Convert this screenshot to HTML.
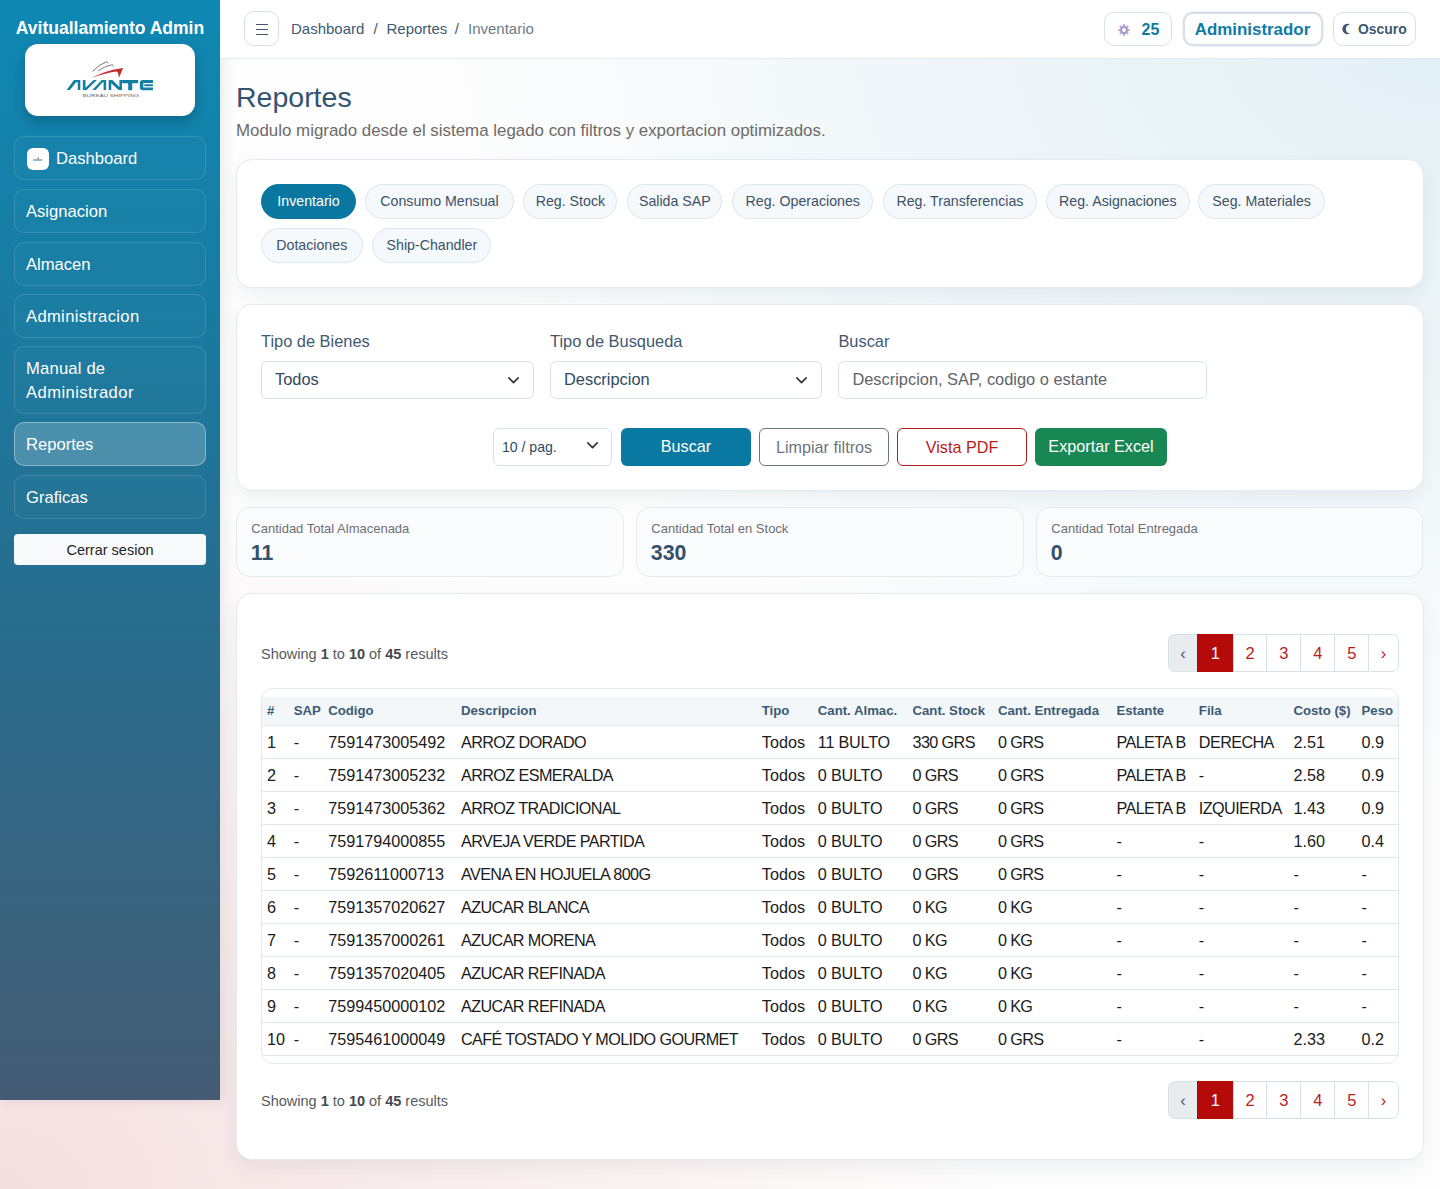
<!DOCTYPE html>
<html lang="es">
<head>
<meta charset="utf-8">
<title>Reportes</title>
<style>
*{box-sizing:border-box;margin:0;padding:0}
html,body{width:1440px;height:1189px;overflow:hidden}
body{font-family:"Liberation Sans",sans-serif;position:relative;
  background:radial-gradient(ellipse 1000px 800px at 100% 0%,#e1eff5 0%,rgba(225,239,245,0.6) 40%,rgba(225,239,245,0) 100%),
    radial-gradient(ellipse 1000px 700px at 0% 100%,#f5e0e1 0%,rgba(245,224,225,0.6) 40%,rgba(245,224,225,0) 100%),#fdfdfd;}
.abs{position:absolute}
/* sidebar */
#sb{left:0;top:0;width:220px;height:1100px;
  background:linear-gradient(180deg,#0e88b3 0%,#1a7aa0 30%,#2a6b8b 60%,#445b73 100%);
  box-shadow:3px 0 12px rgba(40,50,60,0.10);z-index:5}
#sb .ttl{position:absolute;left:0;top:16px;width:220px;text-align:center;color:#fff;font-weight:bold;font-size:17.5px;line-height:24px;white-space:nowrap}
#logo{position:absolute;left:25px;top:44px;width:170px;height:72px;background:#fff;border-radius:13px;box-shadow:0 6px 12px rgba(0,30,50,0.25)}
.nav{position:absolute;left:14px;width:192px;border:1px solid rgba(255,255,255,0.13);border-radius:10px;color:#fff;font-size:16.6px;line-height:24px;padding:10px 11px 8px;background:rgba(255,255,255,0.015)}
.nav.act{background:rgba(255,255,255,0.2);border-color:rgba(255,255,255,0.35)}
#logout{position:absolute;left:14px;top:534px;width:192px;height:31px;background:#f8f9fa;border-radius:4px;color:#212529;font-size:14.5px;line-height:32px;text-align:center}
/* topbar */
#top{left:220px;top:0;width:1220px;height:59px;background:#fff;border-bottom:1px solid #e3eaf0;z-index:6}
#ham{position:absolute;left:24px;top:11px;width:35px;height:35px;border:1px solid #d5e0e8;border-radius:10px}
#ham i{position:absolute;left:11px;width:11.8px;height:1.3px;background:#3d5570}
.bc{position:absolute;top:19px;font-size:15px;line-height:20px;color:#3d5a73;white-space:nowrap}
.tbtn{position:absolute;top:12px;height:34px;border:1px solid #d6e1e9;border-radius:10px;background:#fff}
/* main */
h1{position:absolute;left:236px;top:79px;font-size:28.5px;font-weight:normal;color:#33536f;line-height:36px;white-space:nowrap}
.sub{position:absolute;left:236px;top:120px;font-size:16.9px;color:#6f6a68;line-height:22px;white-space:nowrap}
.card{position:absolute;left:236px;width:1188px;background:#fff;border:1px solid #e3ebf1;border-radius:16px;box-shadow:0 8px 18px rgba(20,45,70,0.06)}
.tab{position:absolute;height:34.8px;border:1px solid #dbe6ef;border-radius:18px;background:#f5f9fc;color:#3d5166;font-size:14.2px;line-height:32.8px;text-align:center;white-space:nowrap}
.tab.act{background:#0a77a0;border-color:#0a77a0;color:#fff}
.lbl{position:absolute;font-size:16.4px;color:#3f5870;line-height:20px;white-space:nowrap}
.sel{position:absolute;height:37.5px;border:1px solid #d6e3ec;border-radius:6px;background:#fff;font-size:16.4px;color:#2f4a63;line-height:35px;white-space:nowrap}
.chev{position:absolute;width:8px;height:8px;border-right:2px solid #2a3340;border-bottom:2px solid #2a3340;transform:rotate(45deg)}
.btn{position:absolute;top:428px;height:38px;border-radius:6px;font-size:16.2px;line-height:36px;text-align:center;white-space:nowrap}
.stat{position:absolute;top:507px;width:388px;height:69.5px;background:#fbfcfe;border:1px solid #e3ebf1;border-radius:14px}
.stat .l{position:absolute;left:14px;top:12.5px;font-size:13px;color:#6b6f75;line-height:16px;white-space:nowrap}
.stat .v{position:absolute;left:13.5px;top:32.5px;font-size:21.3px;font-weight:bold;color:#34506b;line-height:24px}
.show{position:absolute;left:261px;font-size:14.5px;color:#555b61;line-height:20px;white-space:nowrap}
.show b{color:#43484d}
.pag{position:absolute;left:1168.2px;width:231px;height:38px;display:flex}
.pag span{display:block;box-sizing:border-box;height:38px;line-height:36px;text-align:center;color:#b91c1c;font-size:16.5px;border:1px solid #d6e2ea;border-right:none;background:#fff}
.pag span:first-child{background:#e9ecef;color:#4a5a6a;width:28.6px;border-radius:7px 0 0 7px}
.pag span:last-child{border-right:1px solid #d6e2ea;border-radius:0 7px 7px 0}
.pag span.a{background:#b50a0a;color:#fff;border-color:#b50a0a}
#tw{position:absolute;left:261px;top:688px;width:1138px;height:376px;border:1px solid #e1e9ef;border-radius:12px;padding-top:8px;background:#fff}
table{border-collapse:collapse;table-layout:fixed;width:1136px}
th{background:#f3f7fa;height:28.3px;text-align:left;font-size:13.2px;font-weight:bold;color:#3d5a73;padding:0 0 0 5px;white-space:nowrap;border-bottom:1px solid #dfe7ed;line-height:26px}
td:nth-child(4),td:nth-child(7),td:nth-child(8),td:nth-child(9),td:nth-child(10){letter-spacing:-0.6px}
td:nth-child(6){letter-spacing:-0.2px}
td{height:33px;text-align:left;font-size:16.2px;color:#1b1b1b;padding:0 0 0 5px;white-space:nowrap;border-bottom:1px solid #dfe6ec;line-height:32px}
</style>
</head>
<body>
<!-- sidebar -->
<div id="sb" class="abs">
  <div class="ttl">Avituallamiento Admin</div>
  <div id="logo">
    <svg width="170" height="72" viewBox="0 0 170 72">
      <g transform="translate(39,32) scale(0.0416667)" fill="#137ea3">
        <path d="M62 338 L240 98 L392 98 L392 338 L330 338 L330 150 L290 150 L142 338 Z"/>
        <path d="M452 98 L516 98 L516 282 L712 98 L792 98 L540 338 L452 338 Z"/>
        <path d="M680 338 L905 98 L1012 98 L1012 338 L950 338 L950 150 L925 150 L760 338 Z"/>
        <path d="M1072 98 L1160 98 L1330 262 L1330 98 L1392 98 L1392 338 L1310 338 L1134 172 L1134 338 L1072 338 Z"/>
      </g>
      <g transform="translate(35,12) scale(0.069444)">
        <path d="M895 345 L1125 345 L1125 392 L1040 392 L1040 492 L982 492 L982 392 L895 392 Z" fill="#137ea3"/>
        <path d="M1195 345 L1338 345 L1338 390 L1200 390 L1200 452 L1338 452 L1338 495 L1195 495 Q1150 495 1150 455 L1150 385 Q1150 345 1195 345 Z" fill="#137ea3"/><rect x="1215" y="407" width="123" height="28" fill="#137ea3"/>
        <path d="M458 318 Q640 210 908 172 L848 318 Q842 240 822 222 Q660 236 458 318 Z" fill="#c8282a"/>
        <path d="M470 222 Q560 120 672 82 Q690 85 690 105" stroke="#6d6d6d" stroke-width="14" fill="none"/>
        <path d="M548 214 Q650 140 755 125 Q772 132 768 152" stroke="#7a7a7a" stroke-width="14" fill="none"/>
        
      </g>
      <text x="57.5" y="52.6" font-family="Liberation Sans" font-size="4.2" fill="#6a6a6a" textLength="56.5" lengthAdjust="spacingAndGlyphs">BUREAU SHIPPING</text>
    </svg>
  </div>
  <div class="nav" style="top:136px;height:44px;padding-left:41px">
    <span style="position:absolute;left:12px;top:11px;width:22px;height:22px;background:#fff;border-radius:6px"><svg width="22" height="22" style="position:absolute;left:0;top:0"><rect x="6.2" y="11" width="9" height="2" fill="#8fbcd0"/><circle cx="11.2" cy="10.4" r="0.9" fill="#e06060"/></svg></span>Dashboard</div>
  <div class="nav" style="top:189px;height:44px">Asignacion</div>
  <div class="nav" style="top:241.5px;height:44px">Almacen</div>
  <div class="nav" style="top:294px;height:44px;letter-spacing:0.33px">Administracion</div>
  <div class="nav" style="top:346px;height:68px"><span style="letter-spacing:0.2px">Manual de</span><br><span style="letter-spacing:0.42px">Administrador</span></div>
  <div class="nav act" style="top:422px;height:44px">Reportes</div>
  <div class="nav" style="top:475px;height:44px">Graficas</div>
  <div id="logout">Cerrar sesion</div>
</div>

<!-- topbar -->
<div id="top" class="abs">
  <div id="ham"><i style="top:11.8px"></i><i style="top:16.8px"></i><i style="top:21.6px"></i></div>
  <div class="bc" style="left:71px">Dashboard</div><div class="bc" style="left:153.5px">/</div><div class="bc" style="left:166.5px">Reportes</div><div class="bc" style="left:234.8px">/</div><div class="bc" style="left:248px;color:#6b7a88">Inventario</div>
  <div class="tbtn" style="left:884px;width:67.5px"><svg style="position:absolute;left:13px;top:10.5px" width="12" height="12" viewBox="0 0 12 12"><path fill-rule="evenodd" d="M10.22 5.16 L11.70 4.48 L11.70 7.52 L10.22 6.84 L9.58 8.39 L11.10 8.96 L8.96 11.10 L8.39 9.58 L6.84 10.22 L7.52 11.70 L4.48 11.70 L5.16 10.22 L3.61 9.58 L3.04 11.10 L0.90 8.96 L2.42 8.39 L1.78 6.84 L0.30 7.52 L0.30 4.48 L1.78 5.16 L2.42 3.61 L0.90 3.04 L3.04 0.90 L3.61 2.42 L5.16 1.78 L4.48 0.30 L7.52 0.30 L6.84 1.78 L8.39 2.42 L8.96 0.90 L11.10 3.04 L9.58 3.61 Z M6 4.1 A1.9 1.9 0 1 0 6 7.9 A1.9 1.9 0 1 0 6 4.1 Z" fill="#b9abd8"/><circle cx="6" cy="6" r="2.9" fill="none" stroke="#9a8cc0" stroke-width="1"/></svg><span style="position:absolute;left:36.5px;top:7px;font-size:16px;line-height:20px;font-weight:bold;color:#0f7ba3">25</span></div>
  <div class="tbtn" style="left:962.5px;width:140px;top:12.3px;height:33.5px;border:2px solid #d5e0e8;box-shadow:0 0 0 0.5px #e3eaf0"><span style="position:absolute;left:0;width:136px;text-align:center;top:6px;font-size:16.9px;line-height:20px;font-weight:bold;color:#0f7ba3">Administrador</span></div>
  <div class="tbtn" style="left:1113px;width:83px"><svg style="position:absolute;left:8px;top:10.3px" width="10" height="12" viewBox="0 0 10 12"><path d="M7.98 1.43 A5.2 5.2 0 1 0 7.98 10.57 A4.6 4.6 0 0 1 7.98 1.43 Z" fill="#3d5a73"/></svg><span style="position:absolute;left:24px;top:7px;font-size:13.9px;line-height:18px;font-weight:bold;color:#3d5a73">Oscuro</span></div>
</div>

<h1>Reportes</h1>
<div class="sub">Modulo migrado desde el sistema legado con filtros y exportacion optimizados.</div>

<!-- tabs card -->
<div class="card" style="top:159px;height:128.5px"></div>
<div class="tab act" style="left:261px;top:183.8px;width:95px">Inventario</div>
<div class="tab" style="left:365px;top:183.8px;width:149px">Consumo Mensual</div>
<div class="tab" style="left:523.3px;top:183.8px;width:94.2px">Reg. Stock</div>
<div class="tab" style="left:627.2px;top:183.8px;width:95.3px">Salida SAP</div>
<div class="tab" style="left:732.2px;top:183.8px;width:141.1px">Reg. Operaciones</div>
<div class="tab" style="left:883px;top:183.8px;width:153.8px">Reg. Transferencias</div>
<div class="tab" style="left:1046px;top:183.8px;width:143.7px">Reg. Asignaciones</div>
<div class="tab" style="left:1198.2px;top:183.8px;width:126.8px">Seg. Materiales</div>
<div class="tab" style="left:261px;top:228.1px;width:101.5px">Dotaciones</div>
<div class="tab" style="left:372.3px;top:228.1px;width:119.2px">Ship-Chandler</div>

<!-- filter card -->
<div class="card" style="top:303.8px;height:187px"></div>
<div class="lbl" style="left:261px;top:331px">Tipo de Bienes</div>
<div class="lbl" style="left:550px;top:331px">Tipo de Busqueda</div>
<div class="lbl" style="left:838.4px;top:331px">Buscar</div>
<div class="sel" style="left:261px;top:361px;width:273px;padding-left:13px">Todos<svg style="position:absolute;left:245.6px;top:14.6px" width="11" height="7" viewBox="0 0 11 7"><polyline points="0.8,0.9 5.5,5.6 10.2,0.9" fill="none" stroke="#343a40" stroke-width="1.7" stroke-linecap="round" stroke-linejoin="round"/></svg></div>
<div class="sel" style="left:550px;top:361px;width:272px;padding-left:13px">Descripcion<svg style="position:absolute;left:245px;top:14.6px" width="11" height="7" viewBox="0 0 11 7"><polyline points="0.8,0.9 5.5,5.6 10.2,0.9" fill="none" stroke="#343a40" stroke-width="1.7" stroke-linecap="round" stroke-linejoin="round"/></svg></div>
<div class="sel" style="left:838.4px;top:361px;width:368.5px;padding-left:13px;color:#5f6469">Descripcion, SAP, codigo o estante</div>
<div class="sel" style="left:493.4px;top:428.4px;width:119px;height:37.5px;padding-left:7.5px;padding-top:1px;font-size:14.1px">10 / pag.<svg style="position:absolute;left:92.6px;top:12.3px" width="11" height="7" viewBox="0 0 11 7"><polyline points="0.8,0.9 5.5,5.6 10.2,0.9" fill="none" stroke="#343a40" stroke-width="1.7" stroke-linecap="round" stroke-linejoin="round"/></svg></div>
<div class="btn" style="left:621px;width:130px;background:#0a79a1;color:#fff">Buscar</div>
<div class="btn" style="left:759px;width:130px;border:1px solid #6c757d;color:#6c757d;background:#fff">Limpiar filtros</div>
<div class="btn" style="left:897px;width:130px;border:1px solid #b91c1c;color:#b91c1c;background:#fff">Vista PDF</div>
<div class="btn" style="left:1035px;width:132px;background:#198754;color:#fff">Exportar Excel</div>

<!-- stats -->
<div class="stat" style="left:236.3px"><div class="l">Cantidad Total Almacenada</div><div class="v">11</div></div>
<div class="stat" style="left:636.3px"><div class="l">Cantidad Total en Stock</div><div class="v">330</div></div>
<div class="stat" style="left:1036.3px;width:387px"><div class="l">Cantidad Total Entregada</div><div class="v">0</div></div>

<!-- table card -->
<div class="card" style="top:593px;height:567px"></div>
<div class="show" style="top:643.5px">Showing <b>1</b> to <b>10</b> of <b>45</b> results</div>
<div class="pag" style="top:634px"><span>&#8249;</span><span class="a" style="width:36.1px">1</span><span style="width:33.5px">2</span><span style="width:33.9px">3</span><span style="width:34.2px">4</span><span style="width:33.8px">5</span><span style="width:30.4px">&#8250;</span></div>

<div id="tw">
<table>
<colgroup><col style="width:26.8px"><col style="width:34.4px"><col style="width:132.8px"><col style="width:300.8px"><col style="width:56px"><col style="width:94.7px"><col style="width:85.4px"><col style="width:118.6px"><col style="width:82.4px"><col style="width:94.6px"><col style="width:68.1px"><col style="width:41.4px"></colgroup>
<thead><tr><th>#</th><th>SAP</th><th>Codigo</th><th>Descripcion</th><th>Tipo</th><th>Cant. Almac.</th><th>Cant. Stock</th><th>Cant. Entregada</th><th>Estante</th><th>Fila</th><th>Costo ($)</th><th>Peso</th></tr></thead>
<tbody>
<tr><td>1</td><td>-</td><td>7591473005492</td><td>ARROZ DORADO</td><td>Todos</td><td>11 BULTO</td><td>330 GRS</td><td>0 GRS</td><td>PALETA B</td><td>DERECHA</td><td>2.51</td><td>0.9</td></tr>
<tr><td>2</td><td>-</td><td>7591473005232</td><td>ARROZ ESMERALDA</td><td>Todos</td><td>0 BULTO</td><td>0 GRS</td><td>0 GRS</td><td>PALETA B</td><td>-</td><td>2.58</td><td>0.9</td></tr>
<tr><td>3</td><td>-</td><td>7591473005362</td><td>ARROZ TRADICIONAL</td><td>Todos</td><td>0 BULTO</td><td>0 GRS</td><td>0 GRS</td><td>PALETA B</td><td>IZQUIERDA</td><td>1.43</td><td>0.9</td></tr>
<tr><td>4</td><td>-</td><td>7591794000855</td><td>ARVEJA VERDE PARTIDA</td><td>Todos</td><td>0 BULTO</td><td>0 GRS</td><td>0 GRS</td><td>-</td><td>-</td><td>1.60</td><td>0.4</td></tr>
<tr><td>5</td><td>-</td><td>7592611000713</td><td>AVENA EN HOJUELA 800G</td><td>Todos</td><td>0 BULTO</td><td>0 GRS</td><td>0 GRS</td><td>-</td><td>-</td><td>-</td><td>-</td></tr>
<tr><td>6</td><td>-</td><td>7591357020627</td><td>AZUCAR BLANCA</td><td>Todos</td><td>0 BULTO</td><td>0 KG</td><td>0 KG</td><td>-</td><td>-</td><td>-</td><td>-</td></tr>
<tr><td>7</td><td>-</td><td>7591357000261</td><td>AZUCAR MORENA</td><td>Todos</td><td>0 BULTO</td><td>0 KG</td><td>0 KG</td><td>-</td><td>-</td><td>-</td><td>-</td></tr>
<tr><td>8</td><td>-</td><td>7591357020405</td><td>AZUCAR REFINADA</td><td>Todos</td><td>0 BULTO</td><td>0 KG</td><td>0 KG</td><td>-</td><td>-</td><td>-</td><td>-</td></tr>
<tr><td>9</td><td>-</td><td>7599450000102</td><td>AZUCAR REFINADA</td><td>Todos</td><td>0 BULTO</td><td>0 KG</td><td>0 KG</td><td>-</td><td>-</td><td>-</td><td>-</td></tr>
<tr><td>10</td><td>-</td><td>7595461000049</td><td>CAFÉ TOSTADO Y MOLIDO GOURMET</td><td>Todos</td><td>0 BULTO</td><td>0 GRS</td><td>0 GRS</td><td>-</td><td>-</td><td>2.33</td><td>0.2</td></tr>
</tbody>
</table>
</div>

<div class="show" style="top:1091px">Showing <b>1</b> to <b>10</b> of <b>45</b> results</div>
<div class="pag" style="top:1081px"><span>&#8249;</span><span class="a" style="width:36.1px">1</span><span style="width:33.5px">2</span><span style="width:33.9px">3</span><span style="width:34.2px">4</span><span style="width:33.8px">5</span><span style="width:30.4px">&#8250;</span></div>

</body>
</html>
